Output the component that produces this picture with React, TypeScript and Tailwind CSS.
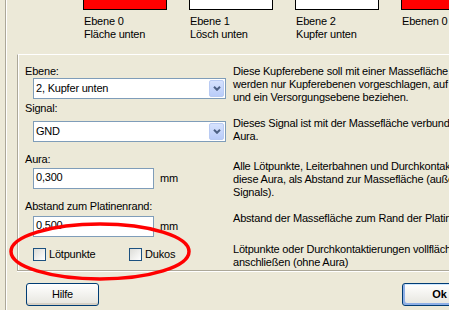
import React from 'react';

// Windows XP style "Massefläche" dialog fragment

function Swatch({ fill, line1, line2 }: { fill: string; line1: string; line2?: string }) {
  return (
    <div className="w-[84px] shrink-0">
      <div className={`h-[10px] border border-t-0 border-black ${fill}`} />
      <div className="mt-[5px] whitespace-nowrap pl-px">
        <div>{line1}</div>
        <div>{line2 ?? '\u00a0'}</div>
      </div>
    </div>
  );
}

function Combo({ value }: { value: string }) {
  return (
    <div className="ml-[8px] flex h-[21px] w-[193px] items-center border border-[#7F9DB9] bg-white pl-[2px] pr-px">
      <span className="flex-1 whitespace-nowrap">{value}</span>
      <div className="flex h-[17px] w-[15px] items-center justify-center rounded-[2px] border border-[#B9CBF3] bg-gradient-to-b from-[#D6E2FD] to-[#B9CCF9]">
        <svg width="8" height="5" viewBox="0 0 8 5">
          <path d="M1 0.8 L4 3.8 L7 0.8" stroke="#4D6185" strokeWidth="2" fill="none" />
        </svg>
      </div>
    </div>
  );
}

function NumberField({ value }: { value: string }) {
  return (
    <div className="ml-[8px] flex items-center">
      <div className="h-[21px] w-[121px] border border-[#7F9DB9] bg-white pl-[2px] pt-[2px]">{value}</div>
      <span className="ml-[6px]">mm</span>
    </div>
  );
}

function Check({ label, className }: { label: string; className?: string }) {
  return (
    <div className={`flex items-start gap-[3px] ${className ?? ''}`}>
      <div className="h-[13px] w-[13px] border border-[#1C5180] bg-gradient-to-br from-[#DCDCD7] to-white" />
      <span>{label}</span>
    </div>
  );
}

function XpButton({ children, isDefault }: { children: React.ReactNode; isDefault?: boolean }) {
  return (
    <div
      className={`flex h-[23px] w-[73px] shrink-0 items-center justify-center rounded-[3px] border border-[#003C74] bg-gradient-to-b from-white to-[#E6E5DE] ${
        isDefault
          ? 'w-[75px] font-bold shadow-[inset_2px_-2px_0_#8EAFE6,inset_-1px_1px_0_#CEE7FF]'
          : 'shadow-[inset_0_-2px_0_#D6D0C5]'
      }`}
    >
      {children}
    </div>
  );
}

export default function App() {
  return (
    <div className="relative flex h-[310px] w-[449px] overflow-hidden bg-[#ECE9D8] font-['Liberation_Sans',Arial,sans-serif] text-[11px] leading-[13px] tracking-[-0.2px] text-black">
      <div className="ml-[5px] w-[2px] shrink-0 border-l border-r border-l-[#ACA899] border-r-white" />

      <div className="flex min-w-0 flex-1 flex-col">
        {/* layer colour swatches */}
        <div className="flex h-[54px] shrink-0 gap-[22px] pl-[76px]">
          <Swatch fill="bg-[#FF0000]" line1="Ebene 0" line2="Fläche unten" />
          <Swatch fill="bg-white" line1="Ebene 1" line2="Lösch unten" />
          <Swatch fill="bg-white" line1="Ebene 2" line2="Kupfer unten" />
          <Swatch fill="bg-[#FF0000]" line1="Ebenen 0" />
        </div>

        <div className="ml-[10px] flex h-[217px] w-[460px] shrink-0 border-t border-l border-b border-t-white border-l-[#ACA899] border-b-[#ACA899] pl-[7px] shadow-[inset_1px_0_0_#fff]">
          <div className="flex w-[208px] shrink-0 flex-col">
            <div className="mt-[10px]">Ebene:</div>
            <Combo value="2, Kupfer unten" />
            <div className="mt-[3px]">Signal:</div>
            <div className="mt-[6px]">
              <Combo value="GND" />
            </div>
            <div className="mt-[11px]">Aura:</div>
            <div className="mt-[2px]">
              <NumberField value="0,300" />
            </div>
            <div className="mt-[11px]">Abstand zum Platinenrand:</div>
            <div className="mt-[3px]">
              <NumberField value="0,500" />
            </div>
            <div className="ml-[8px] mt-[11px] flex">
              <Check label="Lötpunkte" className="w-[96px]" />
              <Check label="Dukos" />
            </div>
          </div>

          <div className="flex flex-col whitespace-nowrap">
            <div className="mt-[10px]">
              <div>Diese Kupferebene soll mit einer Massefläche gefüllt</div>
              <div>werden nur Kupferebenen vorgeschlagen, auf die sich</div>
              <div>und ein Versorgungsebene beziehen.</div>
            </div>
            <div className="mt-[13px]">
              <div>Dieses Signal ist mit der Massefläche verbunden und</div>
              <div>Aura.</div>
            </div>
            <div className="mt-[17px]">
              <div>Alle Lötpunkte, Leiterbahnen und Durchkontaktierungen</div>
              <div>diese Aura, als Abstand zur Massefläche (außer die des</div>
              <div>Signals).</div>
            </div>
            <div className="mt-[13px]">Abstand der Massefläche zum Rand der Platine.</div>
            <div className="mt-[18px]">
              <div>Lötpunkte oder Durchkontaktierungen vollflächig</div>
              <div>anschließen (ohne Aura)</div>
            </div>
          </div>
        </div>
        <div className="ml-[10px] h-px w-[460px] shrink-0 bg-white" />

        <div className="mt-[11px] flex pl-[19px]">
          <XpButton>Hilfe</XpButton>
          <div className="-mr-[28px] ml-auto">
            <XpButton isDefault>Ok</XpButton>
          </div>
        </div>
      </div>

      {/* red marker ellipse drawn over the checkboxes */}
      <svg className="pointer-events-none absolute inset-0" width="449" height="310" viewBox="0 0 449 310">
        <ellipse cx="100" cy="251.5" rx="89" ry="27.5" stroke="#FF0000" strokeWidth="3.5" fill="none" />
      </svg>
    </div>
  );
}
